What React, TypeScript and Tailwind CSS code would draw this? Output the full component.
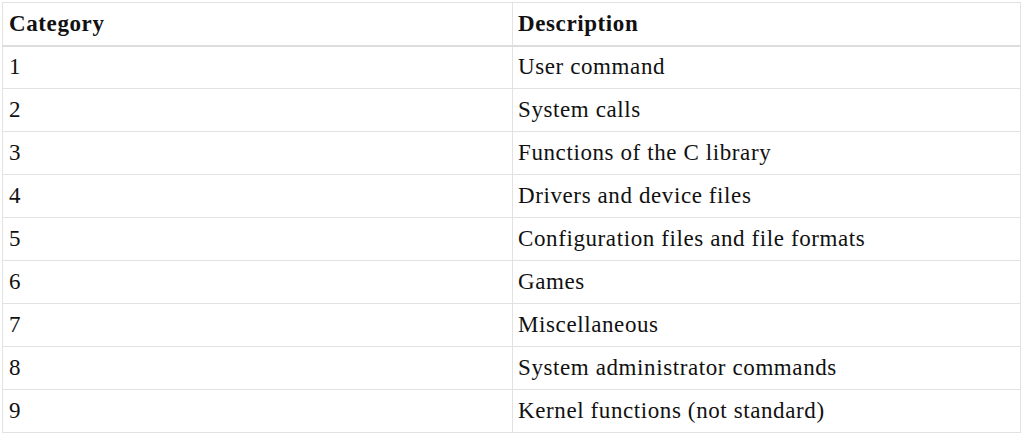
const rows: [string, string][] = [
  ["1", "User command"],
  ["2", "System calls"],
  ["3", "Functions of the C library"],
  ["4", "Drivers and device files"],
  ["5", "Configuration files and file formats"],
  ["6", "Games"],
  ["7", "Miscellaneous"],
  ["8", "System administrator commands"],
  ["9", "Kernel functions (not standard)"],
];

export default function App() {
  return (
    <div className="min-h-screen bg-white p-[2px] font-['Liberation_Serif',serif] text-[23px] tracking-[0.6px] text-[#111]">
      <table className="w-[1019px] border-collapse">
        <thead>
          <tr className="h-[43px] border-b-2 border-[#dddddd]">
            <th className="w-[510px] border border-[#e2e2e2] px-[6px] text-left font-bold">Category</th>
            <th className="border border-[#e2e2e2] px-[5px] text-left font-bold">Description</th>
          </tr>
        </thead>
        <tbody>
          {rows.map(([cat, desc]) => (
            <tr key={cat} className="h-[43px]">
              <td className="border border-[#e2e2e2] px-[6px]">{cat}</td>
              <td className="border border-[#e2e2e2] px-[5px]">{desc}</td>
            </tr>
          ))}
        </tbody>
      </table>
    </div>
  );
}
